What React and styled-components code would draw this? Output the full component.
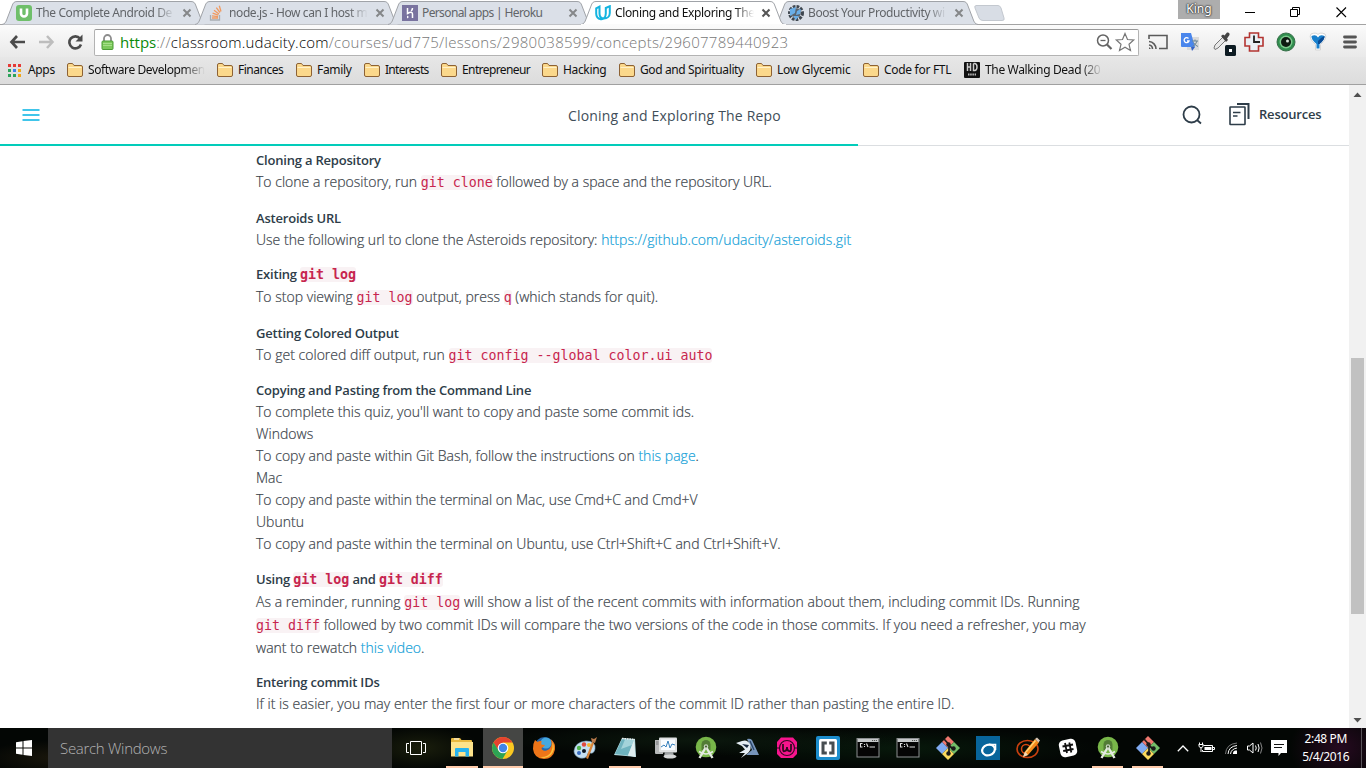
import React from "react";
import styled, { createGlobalStyle, css } from "styled-components";

const Global = createGlobalStyle`
  * { box-sizing: border-box; }
  html, body { margin: 0; padding: 0; overflow: hidden; background: #fff; }
  svg { display: block; flex: none; }
`;

const uiFont = `"Noto Sans", "Open Sans", sans-serif`;
const pageFont = `"Open Sans", "Noto Sans", sans-serif`;

const Screen = styled.div`
  width: 1366px;
  height: 768px;
  display: flex;
  flex-direction: column;
  overflow: hidden;
  font-family: ${uiFont};
`;

/* ---------- browser tabs ---------- */
const TabStrip = styled.div`
  height: 25px;
  display: flex;
  padding-left: 2px;
  position: relative;
  background: linear-gradient(#fff 0 24px, #a3a3a3 24px 25px);
`;
const TabBox = styled.div`
  width: 205px;
  height: 25px;
  flex: none;
  margin-right: -12px;
  padding: 0 12px 0 14px;
  display: flex;
  align-items: center;
  position: relative;
  z-index: ${(p) => (p.$active ? 3 : 1)};
`;
const TabShape = styled.svg`
  position: absolute;
  left: 0;
  top: 0;
`;
const TabTitle = styled.span`
  position: relative;
  width: 139px;
  margin-left: 4px;
  white-space: nowrap;
  font-size: 12px;
  line-height: 24px;
  letter-spacing: ${(p) => p.$ls || 0}px;
  color: ${(p) => (p.$active ? "#111" : "#626569")};
  ${(p) =>
    p.$fade &&
    css`
      mask-image: linear-gradient(90deg, #000 120px, transparent 139px);
    `}
`;
const TabIcon = styled.svg`
  position: relative;
`;
const TabClose = styled.svg`
  position: relative;
  margin-left: 7px;
`;
const WindowButtons = styled.div`
  position: absolute;
  right: 0;
  top: 0;
  display: flex;
  align-items: flex-start;
`;
const UserBadge = styled.div`
  width: 42px;
  height: 19px;
  margin-right: 18px;
  background: #adadad;
  color: #fff;
  font-size: 12px;
  line-height: 17px;
  text-align: center;
  text-shadow: 0 0 1px #333, 0 0 2px #333, 0 0 2px #333;
`;

function Tab({ icon, title, active, fade, ls }) {
  return (
    <TabBox $active={active}>
      <TabShape width="205" height="25" viewBox="0 0 205 25">
        <path
          d="M0 24.5 C3 24 4 22 5 19 L10 6 C11 3 12 1.500 15 1.500 L189 1.500 C192 1.500 193 3 194 6 L199 19 C200 22 201 24 204 24.500"
          fill={active ? "#fff" : "#dbe0e8"}
          stroke="#a0a3a8"
        />
        {active && <rect x="0" y="24" width="205" height="1" fill="#fbfbfb" />}
      </TabShape>
      <TabIcon width="16" height="16" viewBox="0 0 16 16">{icon}</TabIcon>
      <TabTitle $active={active} $fade={fade} $ls={ls}>{title}</TabTitle>
      <TabClose width="10" height="10" viewBox="0 0 10 10">
        <path d="M1.500 1.500 L8.500 8.500 M8.500 1.500 L1.500 8.500" stroke={active ? "#555" : "#858789"} strokeWidth="2" />
      </TabClose>
    </TabBox>
  );
}

const udemyIcon = (
  <g>
    <rect width="16" height="16" rx="3" fill="#6fbf6a" />
    <path d="M5 3.500 V8.500 a3 3 0 0 0 6 0 V3.500" fill="none" stroke="#fff" strokeWidth="2.600" />
  </g>
);
const stackIcon = (
  <g fill="none">
    <path d="M1.500 10 V15 H10.500 V10" stroke="#a9adb2" strokeWidth="1.300" />
    <path d="M3 13 H9 M3 10.800 L9 11.600 M3.600 8.200 L9.300 10.200 M5 5.200 L10 8.900 M7.300 2.600 L11 7.500 M10.300 .8 L12 6.500" stroke="#f09a61" strokeWidth="1.300" />
  </g>
);
const herokuIcon = (
  <g>
    <rect width="16" height="16" fill="#79739f" />
    <path d="M5.500 3 V8.500 C8 7 10.500 6.500 10.500 9 V13 M10.500 3 C10.500 4.500 10 5.200 9.200 6" stroke="#fff" strokeWidth="1.500" fill="none" />
    <path d="M5 10.500 L7 12 L5 13.500 Z" fill="#fff" />
  </g>
);
const udacityIcon = (
  <path d="M1.200 3.400 L4.500 1.600 V8.500 C4.500 12 6.500 13.600 9 13.600 C12 13.600 14.800 11.500 14.800 8 V1.200 L10.800 3 V8.500 C10.800 12 8.500 14.800 5.800 14.300 C2.800 13.800 1.200 11.500 1.200 8.600 Z" fill="none" stroke="#14b4e0" strokeWidth="2" />
);
const wheelIcon = (
  <g>
    <circle cx="8" cy="8" r="6.500" fill="none" stroke="#3f4750" strokeWidth="3" strokeDasharray="2.700 1.100" />
    <circle cx="8" cy="8" r="4.800" fill="#5a6570" />
    <path d="M2 4 L8 2 L7 8 L2 11 Z M9 6 L13 4 L12 9 L8 10 Z M5 11 L11 11 L8 15 Z" fill="#69aee8" />
  </g>
);

/* ---------- toolbar ---------- */
const Toolbar = styled.div`
  height: 32px;
  display: flex;
  align-items: center;
  padding: 2px 7px 0 9px;
  background: linear-gradient(#fbfbfb, #e9e9e9);
`;
const NavButtons = styled.div`
  display: flex;
  gap: 12px;
  width: 85px;
`;
const Omnibox = styled.div`
  width: 1045px;
  height: 27px;
  border: 1px solid #b3b3b3;
  border-top-color: #999;
  border-radius: 2px;
  background: #fff;
  display: flex;
  align-items: center;
  padding: 0 2px 0 6px;
`;
const Url = styled.div`
  flex: 1;
  margin-left: 6px;
  font-size: 15px;
  line-height: 24px;
  letter-spacing: 0.28px;
  color: #777;
  white-space: nowrap;
  font-family: ${pageFont};
  font-weight: 300;
`;
const UrlScheme = styled.span`
  color: #0a8a0a;
  font-weight: 400;
  letter-spacing: 0;
`;
const UrlHost = styled.span`
  color: #000;
  letter-spacing: 0.2px;
`;
const Extensions = styled.div`
  flex: 1;
  display: flex;
  align-items: center;
  gap: 12px;
  padding-left: 9px;
`;
const DropperIcon = styled.svg`
  margin-right: -4px;
`;
const MenuIcon = styled.svg`
  margin-left: 3px;
`;

/* ---------- bookmarks ---------- */
const Bookmarks = styled.div`
  height: 28px;
  display: flex;
  align-items: center;
  padding: 0 0 1px 8px;
  background: linear-gradient(#e7e7e7, #dcdcdc);
  border-bottom: 1px solid #a0a0a0;
`;
const Bookmark = styled.div`
  width: ${(p) => p.$w}px;
  display: flex;
  align-items: center;
  flex: none;
  white-space: nowrap;
`;
const BookmarkLabel = styled.span`
  margin-left: ${(p) => p.$gap || 5}px;
  font-size: 12px;
  line-height: 20px;
  letter-spacing: ${(p) => p.$ls ?? -0.18}px;
  color: #111;
  ${(p) =>
    p.$clip &&
    css`
      width: ${p.$clip}px;
      mask-image: linear-gradient(90deg, #000 ${p.$clip - 22}px, transparent);
    `}
`;
const Folder = () => (
  <svg width="16" height="14" viewBox="0 0 16 14">
    <path d="M.5 12 V2 Q.5 .5 2 .5 H5.500 L7 2.500 H14 Q15.500 2.500 15.500 4 V12 Q15.500 13.500 14 13.500 H2 Q.5 13.500 .5 12Z" fill="#fbd88b" stroke="#8d6234" />
    <path d="M1.500 4.500 H14.500" stroke="#fff1c9" />
  </svg>
);
const folders = [
  { name: "Software Developmen", w: 150, clip: 117, ls: -0.4 },
  { name: "Finances", w: 79, ls: -0.5 },
  { name: "Family", w: 68, ls: -0.3 },
  { name: "Interests", w: 77, ls: -0.7 },
  { name: "Entrepreneur", w: 101, ls: -0.6 },
  { name: "Hacking", w: 77, ls: -0.35 },
  { name: "God and Spirituality", w: 137, ls: -0.38 },
  { name: "Low Glycemic", w: 107, ls: -0.25 },
  { name: "Code for FTL", w: 101, ls: -0.3 },
];

/* ---------- page ---------- */
const Viewport = styled.div`
  height: 643px;
  display: flex;
`;
const Page = styled.main`
  width: 1349px;
  height: 643px;
  overflow: hidden;
  background: #fff;
  font-family: ${pageFont};
`;
const CourseHeader = styled.header`
  height: 59px;
  display: flex;
  align-items: center;
  padding: 0 28px 0 22px;
  color: #2e3d49;
`;
const CourseTitle = styled.h1`
  flex: 1;
  margin: 1px 0 0;
  padding-left: 127px;
  text-align: center;
  font-size: 14px;
  font-weight: 400;
  letter-spacing: 0.19px;
  color: #414e59;
`;
const Resources = styled.span`
  margin-left: 9px;
  margin-top: -2px;
  font-size: 13px;
  font-weight: 600;
  letter-spacing: -0.2px;
  width: 62px;
`;
const Progress = styled.div`
  height: 2px;
  background: linear-gradient(#fff 0 1px, #dbdee1 1px 2px);
`;
const ProgressBar = styled.div`
  width: 858px;
  height: 2px;
  background: #02ccba;
`;
const Article = styled.article`
  width: 1110px;
  padding: 3px 0 0 256px;
`;
const Section = styled.section`
  margin-bottom: ${(p) => p.$gap}px;
`;
const Code = styled.code`
  font-family: "DejaVu Sans Mono", monospace;
  font-size: 13.290px;
  letter-spacing: 0;
  line-height: 14px;
  color: #c7254e;
  background: #f9f2f4;
  border-radius: 3px;
  -webkit-text-stroke: 0;
`;
const Heading = styled.h2`
  margin: 0;
  font-size: 13px;
  font-weight: 600;
  line-height: 22px;
  height: 22px;
  letter-spacing: -0.2px;
  color: #2e3d49;
  white-space: nowrap;
  ${Code} {
    font-weight: 700;
  }
`;
const Line = styled.p`
  margin: 0;
  font-size: 14px;
  font-weight: 300;
  line-height: ${(p) => (p.$code ? 23 : 22)}px;
  height: ${(p) => (p.$code ? 23 : 22)}px;
  letter-spacing: ${(p) => p.$ls ?? 0.015}px;
  color: #3c444b;
  -webkit-text-stroke: 0.2px;
  white-space: nowrap;
`;
const Link = styled.a`
  color: #149fd8;
  letter-spacing: ${(p) => p.$ls ?? 0.02}px;
`;
const Scrollbar = styled.div`
  width: 17px;
  height: 643px;
  background: #f1f1f1;
  display: flex;
  flex-direction: column;
  align-items: center;
  justify-content: space-between;
  padding: 7px 0 5px;
`;
const Thumb = styled.div`
  width: 13px;
  height: 256px;
  background: #c1c1c1;
  margin-top: 157px;
`;

/* ---------- taskbar ---------- */
const Taskbar = styled.footer`
  height: 40px;
  display: flex;
  background:
    radial-gradient(ellipse 80px 18px at 60px 30px, #1b170c, transparent),
    radial-gradient(ellipse 60px 22px at 420px 20px, #1a1e0c, transparent),
    radial-gradient(ellipse 200px 16px at 700px 12px, #0b170d, transparent),
    radial-gradient(ellipse 200px 20px at 900px 20px, #07180b, transparent),
    radial-gradient(ellipse 50px 40px at 1340px 20px, #260a20, transparent),
    #030604;
`;
const StartButton = styled.div`
  width: 48px;
  display: grid;
  place-items: center;
`;
const SearchField = styled.div`
  width: 344px;
  background: #333;
  color: #b4b4b4;
  font-family: ${pageFont};
  font-size: 15px;
  font-weight: 300;
  line-height: 41px;
  padding-left: 12px;
  letter-spacing: -0.3px;
`;
const AppButtons = styled.div`
  display: flex;
  padding-left: 0.75px;
`;
const TaskSlot = styled.div`
  width: ${(p) => p.$w}px;
  display: flex;
  flex-direction: column;
  align-items: center;
  justify-content: center;
  background:
    linear-gradient(#ffcbab, #ffcbab) center bottom / ${(p) => p.$line || 0}px 2px no-repeat,
    ${(p) => (p.$on ? "#454644" : "transparent")};
`;
const Tray = styled.div`
  width: 126px;
  display: flex;
  align-items: center;
  padding-left: 9px;
  gap: 9px;
`;
const NoticeIcon = styled.svg`
  margin-left: -2px;
`;
const Clock = styled.div`
  width: 64px;
  color: #fff;
  font-size: 12px;
  line-height: 18px;
  text-align: center;
  padding-top: 2px;
  letter-spacing: -0.4px;
  white-space: nowrap;
`;
const ShowDesktop = styled.div`
  margin-left: 3px;
  width: 5px;
  border-left: 1px solid #585359;
`;

const Icon24 = ({ children }) => (
  <svg width="24" height="24" viewBox="0 0 24 24">{children}</svg>
);

const Explorer = () => (
  <Icon24>
    <path d="M1 3 Q1 2 2 2 H10 L11.500 4 H21 Q22 4 22 5 V20 H1 Z" fill="#e9b93f" />
    <path d="M1 6 H23 V20.500 H1 Z" fill="#fde38b" />
    <path d="M4 3 H9" stroke="#fff" />
    <path d="M5 20.500 V13 Q5 12 6 12 H18 Q19 12 19 13 V20.500 H15.500 V16 H8.500 V20.500 Z" fill="#27b3ee" />
  </Icon24>
);
const Chrome = () => (
  <Icon24>
    <circle cx="12" cy="12" r="11" fill="#fbc821" />
    <path d="M2.500 6.500 A11 11 0 0 1 21.500 6.500 H12 L7 14.500 Z" fill="#e4432f" />
    <path d="M2.500 6.500 A11 11 0 0 0 11.500 23 L16.500 14.500 L8 15 Z" fill="#2da354" />
    <circle cx="12" cy="12" r="5.300" fill="#fff" />
    <circle cx="12" cy="12" r="4.200" fill="#4285e8" />
  </Icon24>
);
const Firefox = () => (
  <Icon24>
    <circle cx="12.500" cy="11" r="10" fill="#2667ac" />
    <circle cx="14" cy="7" r="5.500" fill="#45a8df" />
    <path d="M3 4 L5.500 6 Q8 4.500 10 5.500 Q8.500 7 9.500 8.500 L13 9 Q12 11 9.500 12 Q10 15.500 14.500 14.500 Q18 13.500 19.500 9 Q20 6 18.500 3 Q24 7 23 13.500 Q21 23 12 23 Q2 22.500 1 13 Q.6 8 3 4Z" fill="#ee7518" />
    <path d="M20.500 6 Q24 13 19 19 Q14 23.500 8 21 Q16 21.500 19 16 Q21 12 20.500 6Z" fill="#fbc13c" />
  </Icon24>
);
const Paint = () => (
  <Icon24>
    <path d="M1 15 Q2 6 13 5 Q23 5 22 13 Q21 18 17 17 Q14 17 14 20 Q12 23 7 22 Q1 20 1 15Z" fill="#c5dff1" stroke="#7ba2bf" strokeWidth=".6" />
    <circle cx="6" cy="12" r="2.200" fill="#4fb44c" /><circle cx="11" cy="8.500" r="2.200" fill="#e04a3f" />
    <circle cx="16" cy="9" r="2" fill="#f2b632" /><circle cx="6" cy="17" r="2" fill="#386cc2" /><circle cx="11" cy="15" r="2" fill="#0b1420" />
    <path d="M13 22 L19 6 L21 7 L15 23 Z" fill="#d8843b" />
    <path d="M19 6 L18 2 L21 3 L24 1 L22 7 Z" fill="#b97a4b" />
  </Icon24>
);
const Notepad = () => (
  <Icon24>
    <path d="M1 19 L9 2 L22 3 L23 21 L13 20 Z" fill="#b6dde2" />
    <path d="M9 3 L21 4 L15 19.500 L2 18 Z" fill="#6fb3bf" />
    <path d="M12 3.500 L21 4 L19 9 L8 13 Z" fill="#a3d3da" />
    <path d="M21 4 L15 19.500 L22.500 21 Z" fill="#dfeef0" />
    <path d="M9 2.500 L22 3.500" stroke="#eee" strokeWidth="1.500" strokeDasharray="1.500 1" />
  </Icon24>
);
const Monitor = () => (
  <Icon24>
    <rect x="5" y="1.500" width="18" height="15" rx="1" fill="#dfe1e2" />
    <rect x="7" y="3.500" width="14" height="10.500" fill="#f9fcff" />
    <path d="M7 11 L10 9 L12 11 L14 5 L16 12 L18 8 L21 9" fill="none" stroke="#3580bd" />
    <path d="M1 4 H5 V16 H9 V18 H2 Q1 18 1 17Z" fill="#b7b9ba" />
    <path d="M2 6 H4.500 M2 8 H4.500" stroke="#77797a" />
    <path d="M11 16 H19 L20 20 H10Z" fill="#9ea2a4" />
    <ellipse cx="16" cy="20.500" rx="6.500" ry="2" fill="#d5d7d8" />
  </Icon24>
);
const AndroidStudio = () => (
  <Icon24>
    <circle cx="12" cy="11" r="10.300" fill="#78b649" />
    <path d="M7.500 8.500 A4.500 4.500 0 0 1 16.500 8.500 V14 H7.500Z" fill="#527c35" />
    <path d="M12 11 L5.500 22 M12 11 L18.500 22" stroke="#e4eae1" strokeWidth="2.400" />
    <path d="M5 15.500 Q12 20.500 19 15.500" stroke="#e4eae1" strokeWidth="1.600" fill="none" />
    <circle cx="12" cy="10.500" r="2.200" fill="#c7d2bf" /><circle cx="12" cy="10.500" r="1" fill="#3c5a2a" />
  </Icon24>
);
const Bird = () => (
  <Icon24>
    <path d="M12 3 Q15 2 17 4 L24 19 L11 19 L17 14 L14 7 Z" fill="#7795bb" />
    <path d="M1 7 L7 5 Q12 3 15 8 Q17 13 13 17 L6 22 L10 17 L4 17 L10 13.500 L7 10 Z" fill="#e5edf4" />
    <path d="M7 8 L14 9 L12 12 Z" fill="#17283f" />
    <path d="M15 5 L19 14" stroke="#294466" strokeWidth="1.300" />
  </Icon24>
);
const Wamp = () => (
  <Icon24>
    <path d="M6 1.500 H18 L22 6 V18 L18 22 H6 L2 18 V6 Z" fill="#f7148d" />
    <circle cx="12" cy="12" r="7.500" fill="none" stroke="#350922" strokeWidth="1.200" />
    <path d="M2 12 H5 M19 12 H22" stroke="#350922" />
    <path d="M8 8 V13 Q8 16 10 15 Q12 15 12 11 Q12 15 14 15 Q16 16 16 13 V8" fill="none" stroke="#350922" strokeWidth="1.800" />
  </Icon24>
);
const Brackets = () => (
  <Icon24>
    <rect width="24" height="24" rx="2" fill="#1c8dcc" />
    <rect x="3" y="3" width="18" height="18" rx="1.500" fill="#fff" />
    <path d="M10.800 7 H7 V17 H10.800 M13.200 7 H17 V17 H13.200" fill="none" stroke="#474d51" strokeWidth="3" />
  </Icon24>
);
const Cmd = () => (
  <Icon24>
    <rect x="1" y="2.500" width="22" height="18.500" fill="#050505" stroke="#8d9092" />
    <rect x="1.500" y="3" width="21" height="3" fill="#c6c9ca" />
    <path d="M16 4.500 H21" stroke="#555" strokeDasharray="1.200 .8" />
    <path d="M6.500 7.500 H4.500 V11 H6.500 M8.500 8 V9 M8.500 10 V11 M10.500 7.500 L12 11 M13.500 11 H19" stroke="#ddd" strokeWidth="1.100" fill="none" />
  </Icon24>
);
const Git = () => (
  <Icon24>
    <path d="M12 0 L18 6 L12 12 L6 6 Z" fill="#f0786f" />
    <path d="M18 6 L24 12 L18 18 L12 12 Z" fill="#72bd68" />
    <path d="M6 6 L12 12 L6 18 L0 12 Z" fill="#80aaf1" />
    <path d="M12 12 L18 18 L12 24 L6 18 Z" fill="#fbd95e" />
    <path d="M8 3 L13 8.500 V18 M13 9.500 L17 13" stroke="#1a1a1a" strokeWidth="1.700" fill="none" />
    <circle cx="12.500" cy="8.500" r="2.200" fill="#1a1a1a" /><circle cx="12.500" cy="17.500" r="2.200" fill="#1a1a1a" /><circle cx="17.500" cy="12.500" r="2.200" fill="#1a1a1a" />
  </Icon24>
);
const OApp = () => (
  <Icon24>
    <rect width="24" height="24" fill="#08659b" />
    <ellipse cx="12.500" cy="14" rx="6.500" ry="5.200" transform="rotate(-18 12.500 14)" fill="none" stroke="#fff" strokeWidth="2.200" />
    <path d="M13 8.500 H19.500 V14" stroke="#fff" strokeWidth="1.600" fill="none" />
  </Icon24>
);
const PencilApp = () => (
  <Icon24>
    <ellipse cx="11.500" cy="13" rx="10.500" ry="8.500" fill="none" stroke="#c9400f" strokeWidth="1.600" />
    <circle cx="10" cy="13" r="4.500" fill="none" stroke="#d8480f" strokeWidth="1.500" />
    <path d="M7 21 L9 15.500 L19 3 L23 6.500 L12 19 Z" fill="#f58a1c" />
    <path d="M10 16 L19.500 4.500" stroke="#ffd375" strokeWidth="1.500" />
    <path d="M19 3 L21 1.500 L24 4.500 L22.500 6.500Z" fill="#d8c7b8" />
    <path d="M7 21 L9 15.500 L12 19Z" fill="#f3dcbb" />
  </Icon24>
);
const Slack = () => (
  <Icon24>
    <rect x="3.500" y="3.500" width="17" height="17" rx="4.500" transform="rotate(-12 12 12)" fill="#fff" />
    <path d="M9 7 L11 17 M13.300 6.500 L15.300 16.500 M6.500 10.500 L17 8.500 M7.200 15 L17.500 13" stroke="#111" strokeWidth="1.800" />
  </Icon24>
);

const apps = [
  [Firefox, 0], [Paint, 0], [Notepad, 32], [Monitor, 0], [AndroidStudio, 0], [Bird, 0], [Wamp, 0], [Brackets, 0],
  [Cmd, 0], [Cmd, 0], [Git, 0], [OApp, 0], [PencilApp, 0], [Slack, 0], [AndroidStudio, 31], [Git, 31],
];

export default function App() {
  return (
    <Screen>
      <Global />
      <TabStrip>
        <Tab icon={udemyIcon} title="The Complete Android De" fade ls={-0.4} />
        <Tab icon={stackIcon} title="node.js - How can I host m" fade ls={-0.4} />
        <Tab icon={herokuIcon} title="Personal apps | Heroku" ls={-0.62} />
        <Tab icon={udacityIcon} title="Cloning and Exploring The" active fade ls={-0.36} />
        <Tab icon={wheelIcon} title="Boost Your Productivity wi" fade ls={-0.4} />
        <svg width="38" height="24" viewBox="0 0 38 24">
          <path d="M11 5.500 H33 Q35 5.500 36 8 L39 18 Q40 20.500 37 20.500 H18 Q15 20.500 14 18 L10 8 Q9 5.500 11.500 5.500Z" transform="translate(-2 0)" fill="#d8dde5" stroke="#c3c8cf" />
        </svg>
        <WindowButtons>
          <UserBadge>King</UserBadge>
          <svg width="128" height="24" viewBox="0 0 128 24" fill="none" stroke="#000">
            <path d="M7 12.500 H17" />
            <path d="M52.500 9.500 H59.500 V16.500 H52.500 Z M54.500 9 V7.500 H61.500 V14.500 H60" />
            <path d="M98.500 7.500 L108 17 M108 7.500 L98.500 17" strokeWidth="1.100" />
          </svg>
        </WindowButtons>
      </TabStrip>

      <Toolbar>
        <NavButtons>
          <svg width="17" height="16" viewBox="0 0 17 16"><path d="M8 2 L2.500 8 L8 14 M3 8 H16" fill="none" stroke="#4b4b4b" strokeWidth="2.700" /></svg>
          <svg width="17" height="16" viewBox="0 0 17 16"><path d="M9 2 L14.500 8 L9 14 M14 8 H1" fill="none" stroke="#bdbdbd" strokeWidth="2.500" /></svg>
          <svg width="17" height="16" viewBox="0 0 17 16"><path d="M13 4.500 A6 6 0 1 0 14 10.500" fill="none" stroke="#4b4b4b" strokeWidth="2.600" /><path d="M15.500 .5 V7.500 H8.500 Z" fill="#4b4b4b" /></svg>
        </NavButtons>
        <Omnibox>
          <svg width="13" height="16" viewBox="0 0 13 16">
            <path d="M3 8 V4.500 A3.500 3.500 0 0 1 10 4.500 V8" fill="none" stroke="#8d8d8d" strokeWidth="1.800" />
            <rect x="1" y="7" width="11" height="8.500" rx="1" fill="#7cc95b" stroke="#4a9b34" />
            <path d="M2 9.500 H11 M2 11.500 H11" stroke="#a5df88" />
          </svg>
          <Url><UrlScheme>https</UrlScheme>://<UrlHost>classroom.udacity.com</UrlHost>/courses/ud775/lessons/2980038599/concepts/29607789440923</Url>
          <svg width="40" height="20" viewBox="0 0 40 20" fill="none" stroke="#646464">
            <circle cx="7" cy="8.500" r="5.500" strokeWidth="1.500" /><path d="M4.500 8.500 H9.500" strokeWidth="1.300" /><path d="M11 12.500 L15.500 17" strokeWidth="2.200" />
            <path d="M29 1.500 L31.500 7.500 L37.700 8 L33 12.300 L34.500 18.500 L29 15.200 L23.500 18.500 L25 12.300 L20.300 8 L26.500 7.500 Z" stroke="#777" strokeWidth="1.200" />
          </svg>
        </Omnibox>
        <Extensions>
          <svg width="20" height="16" viewBox="0 0 20 16" fill="none" stroke="#5a5a5a" strokeWidth="1.600">
            <path d="M1 5 V1.500 H19 V14.500 H11" /><path d="M1 11 A4 4 0 0 1 4.500 15 M1 7.500 A7.500 7.500 0 0 1 8 15" /><path d="M1 13 L3 15 H1Z" fill="#5a5a5a" stroke="none" />
          </svg>
          <svg width="20" height="20" viewBox="0 0 20 20">
            <rect x="7" y="5" width="12" height="13" fill="#dadada" /><path d="M1 1 H11 L15 15 H2 Q1 15 1 14Z" fill="#4a86ec" />
            <path d="M11 15 H15 L12 19Z" fill="#3561c4" /><path d="M8.500 6.500 A2.500 2.500 0 1 0 9 9 H7" stroke="#fff" fill="none" strokeWidth="1.300" />
            <path d="M12 9 H18 M15 7.500 V9 M17 9 Q16 13 12.500 14.500 M13.500 10.500 Q15 13.500 18 14.500" stroke="#6b8593" fill="none" />
          </svg>
          <DropperIcon width="24" height="28" viewBox="0 0 24 28">
            <path d="M2 20 L3 17 L11 9 L14 12 L6 20 L3 21.500Z" fill="#e8e8e8" stroke="#777" /><path d="M9 8 L11 6.500 L12.500 7.500 L15 4.500 Q18 4 17.500 7 L15 10.500 L16 12 L14 14Z" fill="#444" />
            <rect x="13" y="17" width="11" height="11" rx="1.500" fill="#0d1b22" /><rect x="17" y="21" width="3" height="3" fill="#fff" />
          </DropperIcon>
          <svg width="20" height="20" viewBox="0 0 20 20">
            <path d="M5.500 1 H14.500 V5.500 H19 V14 H14.500 V19 H5.500 V14 H1 V5.500 H5.500 Z" fill="#eaf0f5" stroke="#b33431" strokeWidth="1.600" /><path d="M10 3.500 V10 H16" stroke="#222" strokeWidth="1.800" fill="none" />
          </svg>
          <svg width="20" height="20" viewBox="0 0 20 20">
            <circle cx="10" cy="10" r="9" fill="#2f8c4d" stroke="#376f49" /><circle cx="10" cy="10" r="6.500" fill="#7bc98c" /><circle cx="10" cy="10" r="5" fill="#0d1a11" /><circle cx="11.500" cy="9" r="1.500" fill="#d6e2da" />
          </svg>
          <svg width="20" height="20" viewBox="0 0 20 20">
            <path d="M3 2 Q8 0 10 2.500 Q12 0 17 2 Q20 6 12.500 12.500 V18 H7.500 V12.500 Q0 6 3 2Z" fill="#fff" stroke="#d5d5d5" />
            <path d="M3.500 4 Q8 2 10 5.500 Q12 2 16.500 4 Q17 7.500 11.500 12 V16.500 H8.500 V12 Q3 7.500 3.500 4Z" fill="#187fcc" /><path d="M10 9 Q12 6 16.500 4 Q17 7.500 11.500 12 L10 12Z" fill="#0a4b94" />
          </svg>
          <MenuIcon width="14" height="14" viewBox="0 0 14 14"><path d="M1.500 2 H12.500 M1.500 7 H12.500 M1.500 12 H12.500" stroke="#555" strokeWidth="2.800" strokeLinecap="round" /></MenuIcon>
        </Extensions>
      </Toolbar>

      <Bookmarks>
        <Bookmark $w={59}>
          <svg width="13" height="13" viewBox="0 0 13 13">
            <path d="M0 0h3v3H0z M5 0h3v3H5z M10 0h3v3h-3z" fill="#e53b37" /><path d="M0 5h3v3H0z M0 10h3v3H0z M5 10h3v3H5z" fill="#2da35b" />
            <path d="M5 5h3v3H5z" fill="#3e82ec" /><path d="M10 5h3v3h-3z M10 10h3v3h-3z" fill="#f0a71c" />
          </svg>
          <BookmarkLabel $gap={7} $ls={-0.35}>Apps</BookmarkLabel>
        </Bookmark>
        {folders.map(({ name, w, clip, ls }) => (
          <Bookmark key={name} $w={w}><Folder /><BookmarkLabel $clip={clip} $ls={ls}>{name}</BookmarkLabel></Bookmark>
        ))}
        <Bookmark $w={150}>
          <svg width="16" height="16" viewBox="0 0 16 16">
            <rect width="16" height="16" rx="1" fill="#111" /><path d="M3.500 1 V9 M6.500 1 V9 M3.500 5 H6.500 M9.500 1.500 V8.500 H11 Q13 8 13 5 Q13 2 11 1.500 H9.500" stroke="#ccc" strokeWidth="1.500" fill="none" /><path d="M4 12.500 H12" stroke="#bbb" strokeWidth="2" strokeDasharray="1.500 .7" />
          </svg>
          <BookmarkLabel $clip={118} $ls={-0.35}>The Walking Dead (20</BookmarkLabel>
        </Bookmark>
      </Bookmarks>

      <Viewport>
        <Page>
          <CourseHeader>
            <svg width="18" height="14" viewBox="0 0 18 14"><path d="M.5 2 H17.500 M.5 7 H17.500 M.5 12 H17.500" stroke="#02b3e4" strokeWidth="1.700" /></svg>
            <CourseTitle>Cloning and Exploring The Repo</CourseTitle>
            <svg width="20" height="20" viewBox="0 0 20 20" fill="none" stroke="#2e3d49" strokeWidth="1.800"><circle cx="9.500" cy="9.500" r="8" /><path d="M15 15 L19 18.500" /></svg>
            <svg width="48" height="24" viewBox="0 0 48 24" fill="none" stroke="#2e3d49" strokeWidth="1.600">
              <rect x="28" y="4" width="15" height="17.500" rx=".5" /><path d="M35 1 H46.500 V16" strokeWidth="2" /><path d="M31 9.500 H38.500 M31 13 H35.500" />
            </svg>
            <Resources>Resources</Resources>
          </CourseHeader>
          <Progress><ProgressBar /></Progress>
          <Article>
            <Section $gap={14}>
              <Heading>Cloning a Repository</Heading>
              <Line>To clone a repository, run <Code>git clone</Code> followed by a space and the repository URL.</Line>
            </Section>
            <Section $gap={12}>
              <Heading>Asteroids URL</Heading>
              <Line>Use the following url to clone the Asteroids repository: <Link $ls={0.08}>https://github.com/udacity/asteroids.git</Link></Line>
            </Section>
            <Section $gap={14}>
              <Heading>Exiting <Code>git log</Code></Heading>
              <Line $code>To stop viewing <Code>git log</Code> output, press <Code>q</Code> (which stands for quit).</Line>
            </Section>
            <Section $gap={13}>
              <Heading>Getting Colored Output</Heading>
              <Line>To get colored diff output, run <Code>git config --global color.ui auto</Code></Line>
            </Section>
            <Section $gap={13}>
              <Heading>Copying and Pasting from the Command Line</Heading>
              <Line>To complete this quiz, you'll want to copy and paste some commit ids.</Line>
              <Line>Windows</Line>
              <Line>To copy and paste within Git Bash, follow the instructions on <Link>this page</Link>.</Line>
              <Line>Mac</Line>
              <Line $ls={0}>To copy and paste within the terminal on Mac, use Cmd+C and Cmd+V</Line>
              <Line>Ubuntu</Line>
              <Line $ls={0.01}>To copy and paste within the terminal on Ubuntu, use Ctrl+Shift+C and Ctrl+Shift+V.</Line>
            </Section>
            <Section $gap={12}>
              <Heading>Using <Code>git log</Code> and <Code>git diff</Code></Heading>
              <Line $code $ls={0.045}>As a reminder, running <Code>git log</Code> will show a list of the recent commits with information about them, including commit IDs. Running</Line>
              <Line $code $ls={0.03}><Code>git diff</Code> followed by two commit IDs will compare the two versions of the code in those commits. If you need a refresher, you may</Line>
              <Line $code>want to rewatch <Link>this video</Link>.</Line>
            </Section>
            <Section $gap={0}>
              <Heading>Entering commit IDs</Heading>
              <Line $ls={0.03}>If it is easier, you may enter the first four or more characters of the commit ID rather than pasting the entire ID.</Line>
            </Section>
          </Article>
        </Page>
        <Scrollbar>
          <svg width="9" height="5" viewBox="0 0 9 5"><path d="M.5 5 L4.500 .5 L8.500 5Z" fill="#505050" /></svg>
          <Thumb />
          <svg width="9" height="5" viewBox="0 0 9 5"><path d="M.5 0 L4.500 4.500 L8.500 0Z" fill="#505050" /></svg>
        </Scrollbar>
      </Viewport>

      <Taskbar>
        <StartButton>
          <svg width="16" height="16" viewBox="0 0 16 16" fill="#fff"><path d="M0 2.300 L6.500 1.300 V7.500 H0Z M7.500 1.100 L16 0 V7.500 H7.500Z M0 8.500 H6.500 V14.700 L0 13.800Z M7.500 8.500 H16 V16 L7.500 14.900Z" /></svg>
        </StartButton>
        <SearchField>Search Windows</SearchField>
        <TaskSlot $w={48}>
          <svg width="22" height="14" viewBox="0 0 22 14" fill="none" stroke="#fff"><path d="M5.500 .5 H16.500 V13.500 H5.500Z M4 2.500 H1.500 V11.500 H4 M18 2.500 H20.500 V11.500 H18" /></svg>
        </TaskSlot>
        <TaskSlot $w={43} $line={32}><Explorer /></TaskSlot>
        <TaskSlot $w={40} $line={40} $on><Chrome /></TaskSlot>
        <AppButtons>
          {apps.map(([Glyph, line], i) => (
            <TaskSlot key={i} $w={i < 8 ? 40.5 : 40} $line={line}><Glyph /></TaskSlot>
          ))}
        </AppButtons>
        <Tray>
          <svg width="12" height="7" viewBox="0 0 12 7"><path d="M.8 6.200 L6 1 L11.200 6.200" fill="none" stroke="#fff" strokeWidth="1.300" /></svg>
          <svg width="17" height="12" viewBox="0 0 17 12" fill="none" stroke="#fff"><path d="M5.500 3.500 H14.500 V9.500 H4.500 V8 M15 5.500 H16.500 V7.500 H15 M1.500 .5 V2 M4.500 .5 V2 M.5 2.500 H5.500 M1 3 V4.500 L3 6 L5 4.500 V3 M3 6 V10" /><rect x="6.500" y="5" width="7" height="3" fill="#fff" stroke="none" /></svg>
          <svg width="14" height="14" viewBox="0 0 14 14" fill="none" stroke="#fff"><path d="M9 13 V12 Q9 10 11 9.500 H13 V13Z" fill="#fff" stroke="none" /><path d="M6.500 13 Q7 8 13 7 M4 13 Q4.500 5.500 13 4.500" /><path d="M1.500 13 Q2 3 13 2" stroke="#777" /></svg>
          <svg width="17" height="14" viewBox="0 0 17 14" fill="none" stroke="#fff"><path d="M.5 5 H2.500 L6 2 V12 L2.500 9 H.5Z M8.500 4.500 Q10 7 8.500 9.500 M11 3 Q13.200 7 11 11" /><path d="M13.500 1.500 Q16.500 7 13.500 12.500" stroke="#888" /></svg>
          <NoticeIcon width="16" height="16" viewBox="0 0 16 16"><path d="M0 0 H16 V13 H10 L7.500 16 V13 H0Z" fill="#fff" /><path d="M3 4.500 H13 M3 7.500 H11" stroke="#111" /></NoticeIcon>
        </Tray>
        <Clock>2:48 PM<br />5/4/2016</Clock>
        <ShowDesktop />
      </Taskbar>
    </Screen>
  );
}
